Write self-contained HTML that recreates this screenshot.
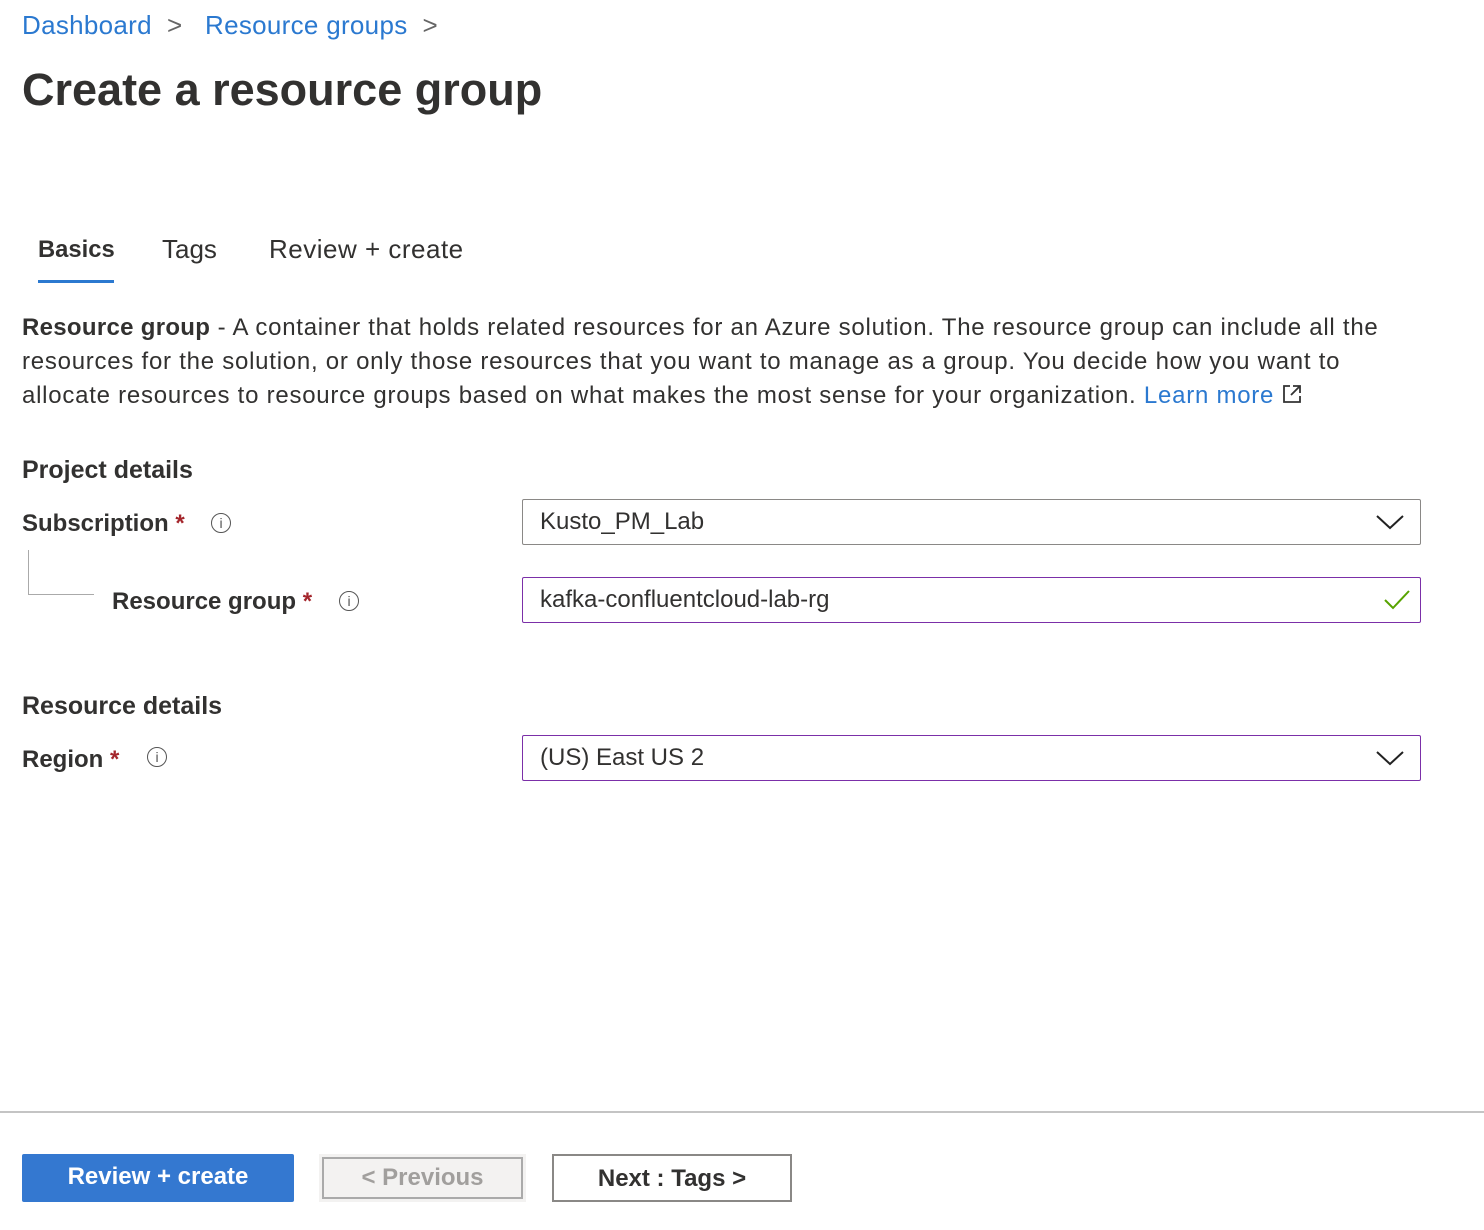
<!DOCTYPE html>
<html><head><meta charset="utf-8"><style>
body{margin:0;width:1484px;height:1230px;background:#fff;font-family:"Liberation Sans",sans-serif;color:#323130;position:relative;overflow:hidden}
.a{position:absolute;white-space:nowrap}
.link{color:#2b79d0}
.b{font-weight:bold}
.star{color:#a4262c}
.info{position:absolute;width:20px;height:20px;border:1.5px solid #555;border-radius:50%;box-sizing:border-box;font-size:14px;text-align:center;line-height:18px;color:#555}
.box{position:absolute;left:522px;width:899px;height:46px;box-sizing:border-box;border:1.5px solid #8a8886;border-radius:2px;font-size:24px;padding-left:17px;line-height:44px}
.purple{border-color:#7b2fa8}
.btn{position:absolute;top:1154px;height:48px;box-sizing:border-box;font-size:24px;text-align:center;line-height:46px;font-weight:bold}
</style></head><body>
<div class="a link" style="left:22px;top:10px;font-size:26px;letter-spacing:0.3px">Dashboard <span style="color:#666">&nbsp;&gt;&nbsp;&nbsp;</span> Resource groups <span style="color:#666">&nbsp;&gt;</span></div>
<div class="a b" style="left:22px;top:64px;font-size:45px;color:#323130">Create a resource group</div>
<div class="a" style="left:38px;top:236px;font-size:23.8px;font-weight:bold">Basics</div>
<div style="position:absolute;left:38px;top:280px;width:76px;height:3px;background:#2b79d0"></div>
<div class="a" style="left:162px;top:234px;font-size:26px">Tags</div>
<div class="a" style="left:269px;top:234px;font-size:26px;letter-spacing:0.5px">Review + create</div>
<div class="a" style="left:22px;top:311px;font-size:24px;line-height:34px;letter-spacing:0.75px">
<span class="b" style="letter-spacing:0.3px">Resource group</span> - A container that holds related resources for an Azure solution. The resource group can include all the<br>
resources for the solution, or only those resources that you want to manage as a group. You decide how you want to<br>
allocate resources to resource groups based on what makes the most sense for your organization. <span class="link">Learn more</span> <svg width="20" height="20" viewBox="0 0 20 20" style="vertical-align:-1px"><path d="M8 2H2v16h16v-6M11 2h7v7M18 2L9 11" fill="none" stroke="#333" stroke-width="1.8"/></svg></div>
<div class="a b" style="left:22px;top:456px;font-size:25px">Project details</div>
<div class="a b" style="left:22px;top:510px;font-size:24px">Subscription <span class="star">*</span></div>
<div class="info" style="left:211px;top:513px">i</div>
<div style="position:absolute;left:28px;top:550px;width:65px;height:44px;border-left:1.5px solid #aaa;border-bottom:1.5px solid #aaa"></div>
<div class="a b" style="left:112px;top:588px;font-size:24px">Resource group <span class="star">*</span></div>
<div class="info" style="left:339px;top:591px">i</div>
<div class="a b" style="left:22px;top:692px;font-size:25px">Resource details</div>
<div class="a b" style="left:22px;top:746px;font-size:24px">Region <span class="star">*</span></div>
<div class="info" style="left:147px;top:747px">i</div>
<div class="box" style="top:499px">Kusto_PM_Lab<svg style="position:absolute;right:16px;top:14px" width="28" height="16"><path d="M1 2l13 12L27 2" fill="none" stroke="#222" stroke-width="2"/></svg></div>
<div class="box purple" style="top:577px">kafka-confluentcloud-lab-rg<svg style="position:absolute;right:10px;top:12px" width="26" height="20"><path d="M1 10l8 8L25 1" fill="none" stroke="#57a300" stroke-width="2"/></svg></div>
<div class="box purple" style="top:735px">(US) East US 2<svg style="position:absolute;right:16px;top:14px" width="28" height="16"><path d="M1 2l13 12L27 2" fill="none" stroke="#222" stroke-width="2"/></svg></div>
<div style="position:absolute;left:0;top:1111px;width:1484px;height:2px;background:#c4c4c4"></div>
<div class="btn" style="left:22px;width:272px;background:#3478d0;color:#fff;border-radius:2px">Review + create</div>
<div class="btn" style="left:319px;width:207px;background:#f3f2f1;border:3px solid #f3f2f1;outline:2px solid #aaa;outline-offset:-5px;color:#a19f9d;line-height:42px">&lt; Previous</div>
<div class="btn" style="left:552px;width:240px;border:2px solid #8a8886;color:#323130">Next : Tags &gt;</div>
</body></html>
